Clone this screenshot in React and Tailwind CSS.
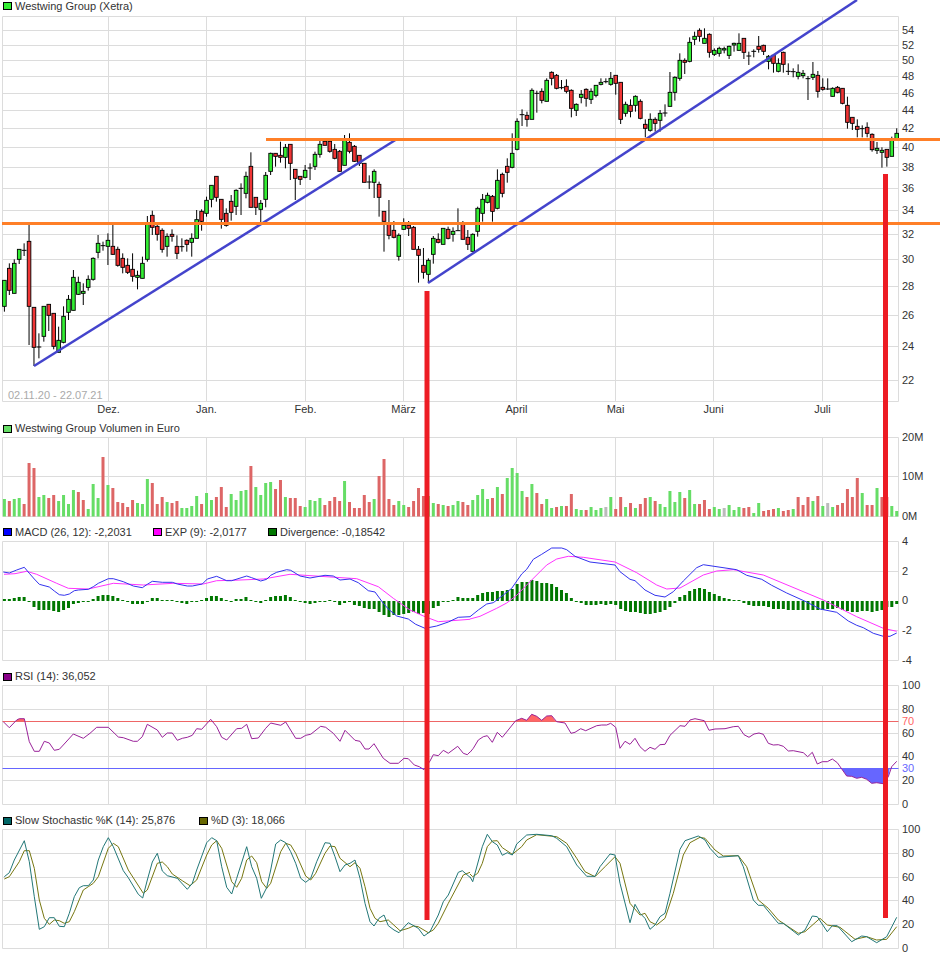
const GRID_X = [108.5, 206.5, 305.5, 403.5, 516.5, 615.5, 713.5, 822.5];
const LEFT = 2.5;
const RIGHT = 898.5;

const PRICE_TICKS = [
  [54, 30.5], [52, 45.5], [50, 60.5], [48, 76.5], [46, 93.5], [44, 110.5], [42, 128.5], [40, 147.5], [38, 167.5],
  [36, 188.5], [34, 210.5], [32, 234.5], [30, 259.5], [28, 286.5], [26, 315.5], [24, 346.5], [22, 380.5],
];
const MONTHS = [
  ["Dez.", 108.5], ["Jan.", 206.5], ["Feb.", 305.5], ["März", 403.5], ["April", 516.5], ["Mai", 615.5], ["Juni", 713.5], ["Juli", 822.5],
];

// candles read off the chart: [high, body top, body bottom, low, colour], y at 3x
const CANDLES = [
  [841,841,919,935,"g"],[790,805,871,885,"r"],[778,790,880,880,"g"],[748,748,778,792,"g"],[730,751,751,768,"d"],[675,724,919,1035,"r"],
  [922,922,1042,1098,"r"],[1000,1041,1041,1075,"d"],[919,919,1009,1025,"g"],[913,913,946,993,"r"],[940,940,1039,1048,"r"],[980,1021,1057,1057,"g"],
  [919,949,1027,1030,"g"],[885,898,937,960,"g"],[810,832,931,931,"g"],[830,847,883,885,"g"],[850,874,880,915,"g"],[826,838,862,872,"g"],
  [772,775,838,842,"g"],[705,730,757,775,"g"],[725,737,737,752,"d"],[700,721,739,795,"g"],[675,739,763,765,"r"],[740,748,796,800,"r"],
  [760,775,802,820,"r"],[775,796,817,822,"r"],[760,808,829,845,"r"],[812,826,832,868,"g"],[770,790,835,835,"g"],[648,670,778,785,"g"],
  [632,646,682,705,"r"],[670,679,703,722,"r"],[685,691,748,758,"r"],[700,709,739,770,"g"],[688,703,709,725,"r"],[706,739,760,777,"r"],
  [715,740,740,755,"d"],[718,721,733,755,"r"],[700,715,727,770,"g"],[630,659,715,715,"g"],[628,634,664,692,"r"],[590,601,640,650,"g"],
  [556,556,598,622,"g"],[529,529,592,605,"r"],[598,598,658,686,"r"],[625,640,676,680,"r"],[585,604,637,662,"r"],[568,571,619,645,"g"],
  [550,565,565,645,"d"],[515,529,580,595,"g"],[457,499,622,622,"r"],[592,592,622,645,"r"],[600,610,628,670,"g"],[516,526,598,622,"g"],
  [458,460,514,525,"g"],[460,460,469,500,"r"],[425,466,472,488,"r"],[432,442,472,505,"g"],[433,433,490,540,"r"],[508,508,535,600,"r"],
  [529,529,538,555,"r"],[495,511,532,535,"g"],[490,504,504,540,"d"],[455,463,499,510,"g"],[420,433,463,473,"g"],[415,424,436,436,"r"],
  [415,424,454,458,"r"],[432,448,475,478,"r"],[450,454,514,516,"r"],[405,418,496,496,"g"],[400,427,454,460,"r"],[435,439,484,486,"r"],
  [466,466,490,498,"r"],[490,490,547,547,"r"],[526,546,546,567,"d"],[508,514,547,594,"g"],[545,553,592,650,"r"],[634,634,664,755,"r"],
  [600,670,706,718,"r"],[663,691,712,715,"r"],[700,706,769,782,"g"],[655,676,688,690,"g"],[663,676,685,708,"r"],[678,682,748,748,"r"],
  [738,748,766,848,"r"],[744,796,817,836,"r"],[775,781,823,848,"g"],[708,715,763,791,"g"],[700,718,727,730,"r"],[685,685,733,733,"g"],
  [680,688,715,718,"r"],[682,694,703,725,"g"],[625,692,692,692,"d"],[663,670,718,718,"r"],[690,712,733,750,"r"],[700,703,754,754,"g"],
  [620,625,694,710,"g"],[582,598,640,665,"g"],[578,586,607,610,"g"],[585,589,634,665,"r"],[508,541,625,628,"g"],[518,523,580,592,"r"],
  [475,499,517,548,"r"],[400,460,502,505,"g"],[355,364,448,451,"g"],[328,344,344,378,"d"],[335,346,358,380,"r"],[265,271,358,358,"g"],
  [272,280,280,338,"d"],[265,274,301,310,"r"],[235,241,304,304,"g"],[214,217,235,256,"r"],[222,226,265,268,"r"],[240,263,263,268,"d"],
  [238,259,274,280,"r"],[268,271,325,352,"r"],[310,313,331,348,"g"],[270,283,292,310,"g"],[265,268,295,320,"r"],[265,274,298,312,"g"],
  [256,256,286,292,"g"],[235,247,253,256,"g"],[235,245,245,250,"d"],[216,235,253,257,"g"],[226,226,250,284,"r"],[247,247,358,372,"r"],
  [305,313,340,350,"g"],[298,316,334,352,"r"],[286,289,316,335,"g"],[298,304,355,358,"r"],[358,373,385,412,"r"],[340,358,391,395,"g"],
  [352,358,370,395,"r"],[330,340,361,395,"g"],[313,339,339,350,"d"],[216,277,319,320,"g"],[229,232,277,302,"g"],[160,181,235,242,"g"],
  [175,181,187,222,"r"],[112,127,184,187,"g"],[95,109,118,135,"g"],[85,91,109,125,"r"],[85,115,130,130,"g"],[100,103,157,173,"r"],
  [145,151,163,168,"g"],[140,145,160,170,"g"],[140,146,150,160,"g"],[137,139,166,177,"g"],[128,130,135,155,"g"],[100,130,151,152,"g"],
  [115,115,157,177,"r"],[155,168,168,195,"d"],[148,154,154,172,"d"],[108,139,148,158,"r"],[134,136,154,165,"r"],[165,169,184,208,"g"],
  [162,166,190,218,"r"],[175,190,214,217,"g"],[155,157,193,218,"r"],[190,214,214,225,"d"],[205,215,215,232,"d"],[193,217,229,238,"g"],
  [210,220,227,235,"g"],[228,236,236,300,"d"],[186,223,232,240,"g"],[213,226,274,293,"r"],[235,262,268,272,"r"],[235,267,267,270,"d"],
  [262,265,289,290,"g"],[258,262,277,280,"r"],[265,265,310,313,"r"],[290,316,367,386,"r"],[352,352,370,390,"r"],[358,379,388,412,"r"],
  [376,386,386,412,"d"],[367,382,400,412,"r"],[400,403,449,455,"r"],[426,445,451,462,"g"],[442,451,457,503,"g"],[448,448,472,500,"r"],
  [410,418,469,469,"g"],[385,400,418,418,"g"],
];

// volume bars: colour + bar top at 3x
const VOLUME = (
  "g252 r258 g252 g249 r267 r144 r159 g246 g240 r249 r240 g258 g240 g267 g225 r231 r255 g282 g207 g249 " +
  "r126 g210 r219 r261 r264 r276 r255 g264 g267 g192 r204 r267 r246 g261 r264 r258 g279 g279 g273 g243 " +
  "r267 g234 g255 r246 r216 r276 g237 g255 g228 g225 r153 g216 g240 g204 g201 r222 r195 g246 r249 r249 " +
  "r273 g276 g255 g258 g249 r270 r258 r246 r258 g198 r261 r279 r279 r240 r261 g252 r183 r132 r252 r270 " +
  "g258 g270 r276 r258 r219 r243 g243 g264 r267 g270 r273 g270 g258 r261 r270 " +
  "g255 g240 g222 g252 r249 g216 r237 g189 g159 g174 g228 r246 g207 r234 r267 g252 g279 r276 g273 r273 " +
  "r237 g282 g285 r285 g276 g285 g279 a276 g246 r282 r246 g276 r264 g279 r267 r249 g246 r258 g267 g276 " +
  "g228 g261 g231 r249 g225 g267 r267 r255 r282 g276 g282 a279 g270 g285 g276 r279 r276 g294 g264 r288 " +
  "r285 r282 g279 r288 r285 g282 r246 r270 r246 g258 r243 g273 a264 g276 r270 r264 r222 r246 r189 g234 " +
  "r270 r270 g219 r246 r246 g273 g288"
).split(" ");

const HIST = [
  552,552,549,546,546,558,576,585,585,585,588,591,585,579,567,564,561,561,552,543,
  540,540,543,549,555,561,567,567,567,558,549,549,555,555,555,561,564,567,561,558,
  555,549,543,543,549,555,558,552,552,546,555,561,564,555,546,543,543,540,546,555,
  561,564,567,564,561,558,555,561,570,564,561,570,573,579,582,582,591,600,606,600,
  600,597,594,591,597,594,597,579,573,561,561,555,546,549,549,
  549,540,534,531,531,528,528,525,522,507,501,501,495,498,504,504,507,516,525,534,
  549,561,564,570,570,570,567,570,567,570,582,588,591,591,594,597,597,594,591,585,
  576,564,546,540,528,522,519,522,531,537,543,549,552,555,555,564,570,573,573,573,
  576,582,582,582,585,585,585,585,585,585,585,585,582,582,579,585,588,591,591,588,
  588,591,588,585,576,576,567,
];

const MACD_A = "10,471 28,474 50,465 73,457 88,475 103,492 118,508 148,516 163,528 178,539 193,541 208,537 223,527 235,525 265,523 280,515 295,505 325,491 340,491 370,500 400,513 427,518 442,508 457,499 487,502 517,502 532,507 562,513 577,513 607,507 622,492 650,484 680,497 695,497 740,483 755,488 782,498 800,493 812,481 830,472 860,464 872,466 900,483 930,489 975,481 1000,483 1020,495 1050,492 1075,503 1105,527 1125,531 1150,565 1165,582 1190,603 1225,612 1247,628 1275,640 1310,633 1345,621 1375,607 1410,605";
const MACD_B = "0,605 25,585 50,567 70,563 100,540 125,520 155,477 170,463 190,433 215,418 245,399 275,399 290,404 315,424 360,441 435,450 450,470 480,493 495,497 525,525 555,541 585,546 610,530 640,498 680,458 700,449 800,464 830,481 875,493 905,511 950,534 1010,561 1050,582 1100,592 1135,618 1160,631 1180,638 1210,655 1240,664 1260,664 1280,654";
const EXP_A = "12,478 45,476 80,469 110,478 170,505 205,520 265,522 340,505 430,510 520,505 610,507 650,497 700,496 790,492 870,478 960,484 1070,491 1135,515 1180,550 1230,585 1275,605 1315,620 1410,613";
const EXP_B = "0,612 30,604 80,580 110,564 140,541 170,510 230,450 260,432 295,424 340,427 435,441 500,473 560,510 590,522 630,519 700,480 740,468 790,464 880,480 1060,555 1160,605 1240,640 1280,649";

const RSI_A = "10,155 28,173 50,150 58,146 73,146 88,215 103,244 118,244 133,214 148,219 163,241 178,238 190,225 220,192 250,205 270,190 290,172 325,172 355,201 370,203 400,214 412,214 427,200 442,163 472,180 487,202 502,189 517,189 532,211 547,205 562,202 577,196 590,176 605,178 632,148 650,170 665,202 680,210 710,176 725,175 740,163 755,206 775,204 797,175 812,159 842,166 857,156 887,205 902,205 917,196 932,193 962,169 977,172 1000,190 1020,214 1035,181 1065,211 1080,214 1095,237 1107,237 1122,221 1150,265 1170,280 1195,280 1212,265 1225,266 1243,285 1258,290 1272,299 1290,273 1300,254 1315,257 1330,241 1345,250 1373,229 1390,250 1402,254 1410,246";
const RSI_B = "0,247 10,235 25,210 40,200 52,197 67,217 82,187 97,202 137,152 155,145 170,151 185,133 200,139 215,151 230,138 245,137 260,155 285,159 303,190 315,187 332,176 347,182 380,167 395,165 410,165 422,160 437,172 450,235 465,214 480,223 495,205 510,230 525,244 540,232 555,238 570,224 585,223 600,196 630,167 645,169 660,150 675,146 703,152 717,181 735,177 765,176 790,170 805,169 822,194 837,202 852,192 867,189 880,193 895,220 910,225 925,224 940,229 955,243 970,242 1000,248 1013,260 1027,247 1042,282 1057,275 1072,275 1087,267 1102,278 1130,318 1145,319 1160,325 1175,322 1190,328 1205,340 1220,338 1240,341 1255,320 1265,290 1280,274";
const RSI_HIGH_A = "45,155 50,150 58,146 73,146 74,155";
const RSI_HIGH_B = "137,155 137,152 155,145 170,151 185,133 200,139 215,151 230,138 245,137 258,155";
const RSI_LOW = "1115,296 1130,318 1145,319 1160,325 1175,322 1190,328 1205,340 1220,338 1240,341 1255,320 1259,296";

const K_A = "13,620 28,608 43,570 73,512 88,575 103,680 118,778 133,770 148,743 163,743 178,769 193,770 208,730 223,680 238,653 250,647 265,647 280,630 295,570 310,530 325,503 340,530 370,602 385,623 415,673 428,684 442,630 457,576 472,550 487,603 502,617 532,625 562,658 577,640 590,600 620,518 635,503 650,512 665,590 680,652 695,672 710,625 740,530 755,590 770,625 784,685 800,653 812,600 827,522 842,510 857,518 872,545 887,580 902,625 917,637 932,625 950,575 975,518 990,520 1005,560 1020,605 1035,585 1050,580 1065,570 1080,625 1095,700 1110,755 1122,768 1137,745 1152,735 1165,767 1182,780 1197,788 1225,758 1255,775 1272,798 1290,785 1315,735 1330,695 1345,675 1375,607 1387,602 1410,622";
const K_B = "0,620 8,635 37,530 52,493 67,515 82,525 97,556 112,548 127,555 140,522 170,495 200,493 245,497 260,505 290,530 320,585 350,619 375,619 390,590 420,552 435,555 450,640 480,758 495,703 510,730 525,745 540,778 555,765 570,740 585,730 600,670 630,538 645,512 685,498 705,510 720,535 745,562 805,557 820,590 850,690 865,706 880,706 925,760 940,760 985,795 1005,780 1027,738 1042,740 1072,785 1087,767 1102,767 1145,815 1175,798 1190,800 1220,818 1250,800 1280,742";
const D_A = "13,627 28,620 58,575 73,542 88,542 103,595 118,690 133,745 148,763 163,750 178,752 193,760 208,755 223,725 250,660 265,650 280,640 295,620 325,535 340,520 355,530 385,600 430,670 442,660 472,580 487,576 502,590 517,612 547,632 570,647 590,630 620,555 635,525 650,512 665,535 695,635 710,652 725,625 740,570 755,558 770,578 785,635 800,655 812,640 842,545 857,520 872,525 887,550 917,618 932,630 947,610 975,550 990,528 1005,530 1020,565 1050,590 1065,578 1080,595 1095,650 1110,715 1125,745 1140,755 1165,750 1200,782 1225,775 1240,768 1255,770 1285,788 1300,780 1315,760 1345,700 1390,615 1410,607";
const D_B = "0,612 8,620 23,610 37,580 52,530 67,513 82,512 97,533 127,553 155,530 170,510 200,494 260,500 290,520 320,565 345,605 375,620 405,590 435,560 450,580 480,700 510,735 525,730 540,755 560,765 585,745 610,670 640,555 660,518 690,502 705,505 735,540 760,558 805,557 830,590 865,690 895,715 925,750 985,790 1005,785 1050,745 1072,765 1110,772 1155,808 1190,800 1220,810 1250,808 1280,770";

const barX = (i) => 4.4 + i * 4.93;

// turn 3x crop coordinates back into page coordinates
function pts(list, ox, oy) {
  return list
    .split(" ")
    .map((p) => {
      const [x, y] = p.split(",").map(Number);
      return `${(x / 3 + ox).toFixed(1)},${(y / 3 + oy).toFixed(1)}`;
    })
    .join(" ");
}

function Legend({ items }) {
  return (
    <div className="flex h-full items-center text-[11px] leading-none text-[#333]">
      {items.map((item) => (
        <div key={item.label} className={`flex items-center gap-[2px] ${item.className}`}>
          <span className={`h-[8px] w-[9px] border border-black ${item.color}`} />
          <span className="pl-[1px]">{item.label}</span>
        </div>
      ))}
    </div>
  );
}

function Chart({ top, height, grid, ticks, children }) {
  return (
    <svg
      className="block overflow-visible"
      width="940"
      height={height}
      viewBox={`0 ${top} 940 ${height}`}
    >
      <g className="stroke-[#dcdcdc]" strokeWidth="1">
        {grid.map((y) => (
          <line key={y} x1={LEFT} x2={RIGHT} y1={y} y2={y} />
        ))}
        {[LEFT, ...GRID_X, RIGHT].map((x) => (
          <line key={x} x1={x} x2={x} y1={grid[0]} y2={grid[grid.length - 1]} />
        ))}
      </g>
      {children}
      {ticks.map(([label, y, cls]) => (
        <text key={label} x="902" y={y + 3.5} className={`text-[11px] ${cls || "fill-[#333]"}`}>
          {label}
        </text>
      ))}
    </svg>
  );
}

function Candles() {
  return (
    <g>
      {CANDLES.map(([hi, top, bot, lo, c], i) => {
        const x = barX(i);
        return (
          <g key={i}>
            <line x1={x} x2={x} y1={hi / 3} y2={lo / 3} className="stroke-black" strokeWidth="1" />
            {c === "d" ? (
              <line x1={x - 2.4} x2={x + 2.4} y1={top / 3} y2={top / 3} className="stroke-black" strokeWidth="1" />
            ) : (
              <rect
                x={x - 1.8}
                y={top / 3}
                width="3.6"
                height={(bot - top) / 3}
                className={c === "g" ? "fill-[#33ee33] stroke-black" : "fill-[#f03535] stroke-black"}
                strokeWidth="0.9"
              />
            )}
          </g>
        );
      })}
    </g>
  );
}

function Volume() {
  const colors = { g: "fill-[#66dd66]", r: "fill-[#dd6666]", a: "fill-[#bbbbbb]" };
  return (
    <g>
      {VOLUME.map((v, i) => {
        const y = 415 + Number(v.slice(1)) / 3;
        return <rect key={i} x={barX(i) - 1.5} y={y} width="3" height={516.5 - y} className={colors[v[0]]} />;
      })}
    </g>
  );
}

function Histogram() {
  const zero = 415 + 558 / 3;
  return (
    <g className="fill-[#007700]">
      {HIST.map((v, i) => {
        const y = 415 + v / 3;
        const h = Math.max(Math.abs(y - zero), 1);
        return <rect key={i} x={barX(i) - 1.5} y={Math.min(y, zero)} width="3" height={h} />;
      })}
    </g>
  );
}

function Line({ a, b, oa, ob, className }) {
  return (
    <>
      <polyline points={pts(a, 0, oa)} fill="none" strokeWidth="1" className={className} />
      <polyline points={pts(b, 470, ob)} fill="none" strokeWidth="1" className={className} />
    </>
  );
}

export default function App() {
  return (
    <div className="relative h-[958px] w-[940px] overflow-hidden bg-white font-['Liberation_Sans',Arial,sans-serif]">
      {/* price */}
      <div className="h-[16px] pb-[4px] pl-[3px]">
        <Legend items={[{ label: "Westwing Group (Xetra)", color: "bg-[#33ee33]" }]} />
      </div>
      <Chart top={16} height={404} grid={[16.5, 30.5, 45.5, 60.5, 76.5, 93.5, 110.5, 128.5, 147.5, 167.5, 188.5, 210.5, 234.5, 259.5, 286.5, 315.5, 346.5, 380.5, 401.5]} ticks={PRICE_TICKS}>
        <Candles />
        <line x1="34" y1="366" x2="397" y2="139" strokeWidth="2.5" className="stroke-[#4444cc]" />
        <line x1="428" y1="283" x2="857" y2="0" strokeWidth="2.5" className="stroke-[#4444cc]" />
        <line x1="266" y1="139.5" x2="940" y2="139.5" strokeWidth="3" className="stroke-[#ff7f27]" />
        <line x1="2" y1="223.5" x2="940" y2="223.5" strokeWidth="3" className="stroke-[#ff7f27]" />
        <text x="8" y="399" className="fill-[#aaa] text-[11px]">02.11.20 - 22.07.21</text>
        {MONTHS.map(([m, x]) => (
          <text key={m} x={x} y="413" textAnchor="middle" className="fill-[#333] text-[11px]">{m}</text>
        ))}
      </Chart>

      {/* volume */}
      <div className="h-[17px] pl-[3px]">
        <Legend items={[{ label: "Westwing Group Volumen in Euro", color: "bg-[#66dd66]" }]} />
      </div>
      <Chart top={437} height={88} grid={[437.5, 476.5, 516.5]} ticks={[["20M", 437.5], ["10M", 476.5], ["0M", 516.5]]}>
        <Volume />
      </Chart>

      {/* macd */}
      <div className="h-[16px] pb-[2px] pl-[3px]">
        <Legend
          items={[
            { label: "MACD (26, 12): -2,2031", color: "bg-[#0000ff]", className: "w-[150px]" },
            { label: "EXP (9): -2,0177", color: "bg-[#ff00ff]", className: "w-[115px]" },
            { label: "Divergence: -0,18542", color: "bg-[#007700]" },
          ]}
        />
      </div>
      <Chart top={541} height={127} grid={[541.5, 571.5, 630.5, 660.5]} ticks={[["4", 541.5], ["2", 571.5], ["0", 600.5], ["-2", 630.5], ["-4", 660.5]]}>
        <Histogram />
        <Line a={EXP_A} b={EXP_B} oa={415} ob={415} className="stroke-[#ff33ff]" />
        <Line a={MACD_A} b={MACD_B} oa={415} ob={415} className="stroke-[#3333ee]" />
      </Chart>

      {/* rsi */}
      <div className="h-[17px] pl-[3px]">
        <Legend items={[{ label: "RSI (14): 36,052", color: "bg-[#880088]" }]} />
      </div>
      <Chart
        top={685}
        height={127}
        grid={[685.5, 709.5, 733.5, 756.5, 780.5, 804.5]}
        ticks={[
          ["100", 685], ["80", 709], ["70", 721.5, "fill-[#ff6666]"], ["60", 733], ["40", 756],
          ["30", 768.5, "fill-[#6666ff]"], ["20", 780], ["0", 804],
        ]}
      >
        <polygon points={pts(RSI_HIGH_A, 0, 670)} className="fill-[#ff6666]" />
        <polygon points={pts(RSI_HIGH_B, 470, 670)} className="fill-[#ff6666]" />
        <polygon points={pts(RSI_LOW, 470, 670)} className="fill-[#6666ff]" />
        <line x1={LEFT} x2={RIGHT} y1="721.5" y2="721.5" strokeWidth="1" className="stroke-[#ee6666]" />
        <line x1={LEFT} x2={RIGHT} y1="768.5" y2="768.5" strokeWidth="1" className="stroke-[#6666ff]" />
        <Line a={RSI_A} b={RSI_B} oa={670} ob={670} className="stroke-[#992299]" />
      </Chart>

      {/* stochastic */}
      <div className="h-[17px] pl-[3px]">
        <Legend
          items={[
            { label: "Slow Stochastic %K (14): 25,876", color: "bg-[#006666]", className: "w-[196px]" },
            { label: "%D (3): 18,066", color: "bg-[#666600]" },
          ]}
        />
      </div>
      <Chart top={829} height={129} grid={[829.5, 853.5, 877.5, 900.5, 924.5, 948.5]} ticks={[["100", 829], ["80", 853], ["60", 877], ["40", 900], ["20", 924], ["0", 948]]}>
        <Line a={D_A} b={D_B} oa={670} ob={670} className="stroke-[#777711]" />
        <Line a={K_A} b={K_B} oa={670} ob={670} className="stroke-[#227777]" />
      </Chart>

      {/* red markers run across all panels */}
      <svg className="absolute left-0 top-0" width="940" height="958">
        <line x1="427" x2="427" y1="291" y2="920" strokeWidth="5" className="stroke-[#ed1c24]" />
        <line x1="885.5" x2="885.5" y1="174" y2="918" strokeWidth="5" className="stroke-[#ed1c24]" />
      </svg>
    </div>
  );
}
